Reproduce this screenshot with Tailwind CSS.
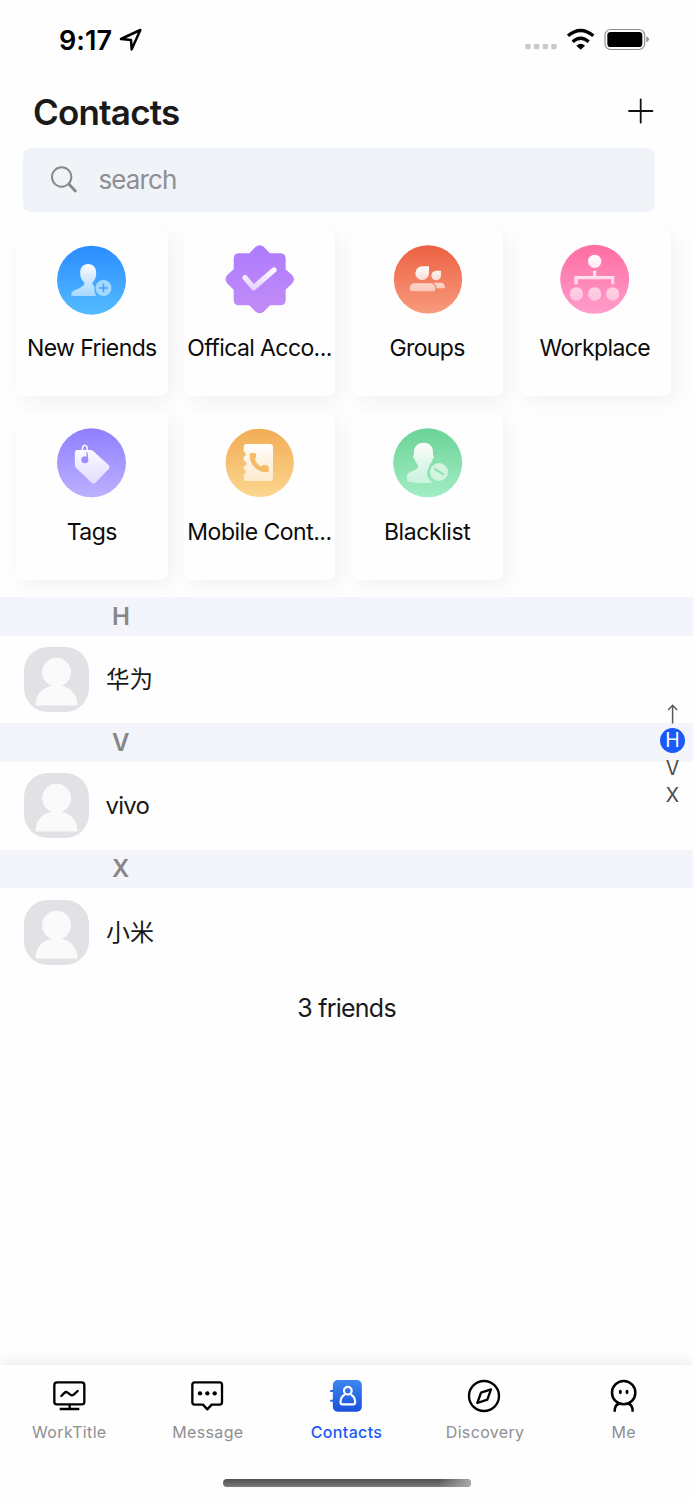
<!DOCTYPE html>
<html lang="en">
<head>
<meta charset="utf-8">
<title>Contacts</title>
<script src="https://cdn.jsdelivr.net/npm/@tailwindcss/browser@4"></script>
</head>
<body class="bg-white">
<div class="relative flex h-[1500px] w-[693px] flex-col overflow-hidden bg-[#fefefe] font-['Inter','Noto_Sans_CJK_SC',sans-serif] text-[#1a1a1a]">

  <!-- Status bar -->
  <div class="flex h-20 shrink-0 items-center pl-[59px] pr-[43.5px] text-black">
    <span class="w-[54px] whitespace-nowrap pt-px text-[27px] font-semibold leading-8 tracking-[0.1px]">9:17</span>
    <svg class="ml-[6px] h-6 w-6" viewBox="357 84 72 72" fill="none" stroke="#000" stroke-width="7.500" stroke-linejoin="round"><path d="M363 117 L421 90 L395 148 L393 120 Z"/></svg>
    <svg class="ml-auto h-[26px] w-[126px]" viewBox="530 81 378 78">
      <g fill="#c9c9cb"><rect x="534" y="132" width="16" height="16" rx="4"/><rect x="560" y="132" width="16" height="16" rx="4"/><rect x="586" y="132" width="16" height="16" rx="4"/><rect x="612" y="132" width="16" height="16" rx="4"/></g>
      <g fill="none" stroke="#000" stroke-width="10"><path d="M662 107 Q700 76 738 107"/><path d="M676 125 Q700 104 724 125"/></g>
      <path d="M687 137 Q700 126 713 137 L700 149 Z"/>
      <rect x="773" y="88.500" width="119" height="60" rx="17" fill="none" stroke="#8f8f8f" stroke-width="3.500"/>
      <rect x="780" y="96" width="105" height="45" rx="10"/>
      <path d="M897 109 Q905 112 905 118 Q905 124 897 127 Z" fill="#8f8f8f"/>
    </svg>
  </div>

  <!-- Title row -->
  <header class="flex h-[68px] shrink-0 items-center justify-between pl-[33px] pr-[39px]">
    <h1 class="mb-[3px] text-[35px] font-semibold leading-[63px] tracking-[-0.8px]">Contacts</h1>
    <svg class="mb-[6px] h-[26px] w-[26px]" viewBox="0 0 26 26" stroke="#111" stroke-width="1.800" stroke-linecap="round"><path d="M12.700 1.300V24.700M1 13H24.400"/></svg>
  </header>

  <!-- Search -->
  <div class="ml-[23px] flex h-[64px] w-[632px] shrink-0 items-center rounded-[7px] bg-[#f0f3f8] pl-[27px]">
    <svg class="h-7 w-7" viewBox="149 497 84 84" fill="none" stroke="#87878b"><circle cx="184" cy="530" r="29" stroke-width="6"/><path d="M206 552 L225 572" stroke-width="8.500" stroke-linecap="round"/></svg>
    <span class="ml-[20.5px] text-[26px] leading-8 tracking-[-0.9px] text-[#8e8e93]">search</span>
  </div>

  <!-- Shortcuts -->
  <div class="ml-4 mt-[16.6px] grid shrink-0 grid-cols-[repeat(4,151.6px)] gap-x-[16.1px] gap-y-[16.7px] text-[23px] leading-[30px] text-[#0c0c0c]">
    <div class="flex h-[167.5px] flex-col items-center rounded-lg bg-[#fefefe] pt-[15px] shadow-[6px_6px_20px_rgba(0,0,0,0.05)]">
      <svg class="h-[71px] w-[71px] shrink-0" viewBox="170.500 71 213 213">
        <defs>
          <linearGradient id="blue" x2="0" y2="1"><stop stop-color="#2a8cff"/><stop offset="1" stop-color="#54bcff"/></linearGradient>
          <linearGradient id="w1" gradientUnits="userSpaceOnUse" x1="0" y1="130" x2="0" y2="230"><stop stop-color="#fff"/><stop offset="1" stop-color="#fff" stop-opacity=".5"/></linearGradient>
        </defs>
        <circle cx="277" cy="179.500" r="103.500" fill="url(#blue)"/>
        <path fill="url(#w1)" d="M267 131 C282 131 291 142 291 157 C291 172 286 180 281 185 C278 190 281 195 285 197 C286 210 286 218 291 227 H221 C216 227 215 224 217 218 C221 209 240 207 250 197 C257 192 257 188 253 184 C247 178 243 170 243 157 C243 142 252 131 267 131 Z"/>
        <circle cx="313" cy="203" r="24" fill="#a5d8ff"/>
        <path d="M313 190V216M300 203H326" stroke="#3ba0ff" stroke-width="4.500"/>
      </svg>
      <span class="mt-[18px] whitespace-nowrap tracking-[-0.6px]">New Friends</span>
    </div>
    <div class="flex h-[167.5px] flex-col items-center rounded-lg bg-[#fefefe] pt-[15px] shadow-[6px_6px_20px_rgba(0,0,0,0.05)]">
      <svg class="h-[71px] w-[71px] shrink-0" viewBox="673 71 213 213">
        <defs>
          <linearGradient id="purple" x2="0" y2="1"><stop stop-color="#ae7bff"/><stop offset="1" stop-color="#c28cf6"/></linearGradient>
          <linearGradient id="w2" gradientUnits="userSpaceOnUse" x1="0" y1="140" x2="0" y2="212"><stop stop-color="#fff"/><stop offset="1" stop-color="#fff" stop-opacity=".6"/></linearGradient>
        </defs>
        <path fill="url(#purple)" d="M768 79 Q780 70 792 79 L811 99 H842 Q858 99 858 115 V147 L878 165 Q888 177 878 189 L858 208 V239 Q858 255 842 255 H811 L792 274 Q780 284 768 274 L749 255 H718 Q702 255 702 239 V208 L682 189 Q673 177 682 165 L702 147 V115 Q702 99 718 99 H749 Z"/>
        <path d="M736 172 L762 202 L823 149" fill="none" stroke="url(#w2)" stroke-width="16" stroke-linecap="round" stroke-linejoin="round"/>
      </svg>
      <span class="mt-[18px] whitespace-nowrap tracking-[-0.6px]">Offical Acco...</span>
    </div>
    <div class="flex h-[167.5px] flex-col items-center rounded-lg bg-[#fefefe] pt-[15px] shadow-[6px_6px_20px_rgba(0,0,0,0.05)]">
      <svg class="h-[71px] w-[71px] shrink-0" viewBox="135 71 213 213">
        <defs>
          <linearGradient id="red" x2="0" y2="1"><stop stop-color="#ed6143"/><stop offset="1" stop-color="#f89a7c"/></linearGradient>
          <linearGradient id="w3" gradientUnits="userSpaceOnUse" x1="0" y1="137" x2="0" y2="216"><stop stop-color="#fff"/><stop offset="1" stop-color="#fff" stop-opacity=".5"/></linearGradient>
        </defs>
        <circle cx="243" cy="177" r="102.500" fill="url(#red)"/>
        <g fill="url(#w3)">
          <path d="M226 138 H246 V159 A20.500 20.500 0 1 1 226 138 Z"/>
          <path d="M267 151 H282 V166 A14.500 14.500 0 1 1 267 151 Z"/>
          <path d="M202 189 H250 C259 189 265 197 265 206 C265 211 263 213 259 213 H194 C190 213 188 210 188 206 C188 196 194 189 202 189 Z"/>
          <path d="M259 187 H281 C289 187 294 193 294 200 C294 203 292 204 289 204 H269 C268 197 264 190 259 187 Z"/>
        </g>
      </svg>
      <span class="mt-[18px] whitespace-nowrap tracking-[-0.6px]">Groups</span>
    </div>
    <div class="flex h-[167.5px] flex-col items-center rounded-lg bg-[#fefefe] pt-[15px] shadow-[6px_6px_20px_rgba(0,0,0,0.05)]">
      <svg class="h-[71px] w-[71px] shrink-0" viewBox="638 71 213 213">
        <defs>
          <linearGradient id="pink" x2="0" y2="1"><stop stop-color="#ff6da2"/><stop offset="1" stop-color="#ff9dcb"/></linearGradient>
          <linearGradient id="w4" gradientUnits="userSpaceOnUse" x1="0" y1="100" x2="0" y2="242"><stop stop-color="#fff"/><stop offset="1" stop-color="#fff" stop-opacity=".45"/></linearGradient>
        </defs>
        <circle cx="745" cy="177" r="103.500" fill="url(#pink)"/>
        <g fill="url(#w4)">
          <circle cx="745" cy="123" r="20"/>
          <path d="M740 151 H750 V167 H804 V192 H794 V177 H695 V192 H684 V167 H740 Z"/>
          <circle cx="690" cy="221" r="20"/><circle cx="745" cy="221" r="20"/><circle cx="799" cy="221" r="20"/>
        </g>
      </svg>
      <span class="mt-[18px] whitespace-nowrap tracking-[-0.6px]">Workplace</span>
    </div>
    <div class="flex h-[167.5px] flex-col items-center rounded-lg bg-[#fefefe] pt-[15px] shadow-[6px_6px_20px_rgba(0,0,0,0.05)]">
      <svg class="h-[71px] w-[71px] shrink-0" viewBox="170.500 69 213 213">
        <defs>
          <linearGradient id="violet" x2="0" y2="1"><stop stop-color="#8f7fff"/><stop offset="1" stop-color="#bcb1ff"/></linearGradient>
          <linearGradient id="w5" gradientUnits="userSpaceOnUse" x1="0" y1="130" x2="0" y2="238"><stop stop-color="#fff"/><stop offset="1" stop-color="#fff" stop-opacity=".6"/></linearGradient>
        </defs>
        <circle cx="277" cy="173.500" r="103.500" fill="url(#violet)"/>
        <path fill="url(#w5)" d="M234 135 H274 Q279 135 283 139 L329 181 Q334 186 329 191 L289 233 Q283 239 277 233 L231 189 Q227 186 227 181 V142 Q227 135 234 135 Z"/>
        <circle cx="257" cy="164" r="10.500" fill="#9c8eff"/>
        <path d="M264 160 C266 152 265 147 262 141" fill="none" stroke="#9c8eff" stroke-width="4"/>
        <path d="M250 141 C248 128 252 121 257 121 C263 121 266 130 264 142" fill="none" stroke="#fff" stroke-width="4.500"/>
      </svg>
      <span class="mt-[18px] whitespace-nowrap tracking-[-0.5px]">Tags</span>
    </div>
    <div class="flex h-[167.5px] flex-col items-center rounded-lg bg-[#fefefe] pt-[15px] shadow-[6px_6px_20px_rgba(0,0,0,0.05)]">
      <svg class="h-[71px] w-[71px] shrink-0" viewBox="673 69 213 213">
        <defs>
          <linearGradient id="amber" x2="0" y2="1"><stop stop-color="#f2ac55"/><stop offset="1" stop-color="#fbd68f"/></linearGradient>
          <linearGradient id="w6" gradientUnits="userSpaceOnUse" x1="0" y1="116" x2="0" y2="229"><stop stop-color="#fff"/><stop offset="1" stop-color="#fff" stop-opacity=".6"/></linearGradient>
        </defs>
        <circle cx="780" cy="173.500" r="102.500" fill="url(#amber)"/>
        <path fill="url(#w6)" d="M742 117 H810 Q820 117 820 127 V218 Q820 228 810 228 H742 Q732 228 732 218 V208 A7 7 0 0 0 735 195 L732 192 V183 A7 7 0 0 0 735 169 L732 166 V155 A7 7 0 0 0 735 142 L732 139 V127 Q732 117 742 117 Z"/>
        <path fill="#f5bb68" d="M752 144 L766 144 L770 148 L768 159 L766 163 Q770 177 784 185 L791 179 L805 182 L807 186 V201 Q784 204 767 189 Q750 174 750 149 Z"/>
      </svg>
      <span class="mt-[18px] whitespace-nowrap tracking-[-0.5px]">Mobile Cont...</span>
    </div>
    <div class="flex h-[167.5px] flex-col items-center rounded-lg bg-[#fefefe] pt-[15px] shadow-[6px_6px_20px_rgba(0,0,0,0.05)]">
      <svg class="h-[71px] w-[71px] shrink-0" viewBox="135 69 213 213">
        <defs>
          <linearGradient id="green" x2="0" y2="1"><stop stop-color="#6cd396"/><stop offset="1" stop-color="#a2edc4"/></linearGradient>
          <linearGradient id="w7" gradientUnits="userSpaceOnUse" x1="0" y1="112" x2="0" y2="235"><stop stop-color="#fff"/><stop offset="1" stop-color="#fff" stop-opacity=".5"/></linearGradient>
        </defs>
        <circle cx="242" cy="173.500" r="103.500" fill="url(#green)"/>
        <path fill="url(#w7)" d="M230 113 C248 113 258 125 258 140 V150 C262 153 261 159 257 163 C255 171 251 176 247 181 V186 C236 198 237 221 258 233 Q215 237 183 230 Q180 229 180 224 V212 C180 197 211 199 213 185 V180 C208 175 205 170 203 163 C198 159 197 153 201 149 V140 C201 125 212 113 230 113 Z"/>
        <circle cx="276" cy="201" r="27" fill="#d3f4e1"/>
        <path d="M264 192 L289 208" stroke="#8fe3b5" stroke-width="6.500" stroke-linecap="round"/>
      </svg>
      <span class="mt-[18px] whitespace-nowrap tracking-[-0.4px]">Blacklist</span>
    </div>
  </div>

  <!-- Contact list -->
  <main class="relative mt-[16.7px] flex flex-col">
    <div class="flex h-[38.7px] items-center bg-[#f4f5fa] pl-[112px] pt-px text-[24px] font-semibold text-[#87878b]">H</div>
    <div class="flex h-[87.6px] items-center bg-[#fefefe] pl-[24.4px]">
      <svg class="h-[65px] w-[65px]" viewBox="0 0 65 65"><rect width="65" height="65" rx="24" fill="#e1e1e6"/><g fill="#fafafa"><circle cx="32.600" cy="25.300" r="14.500"/><path d="M11.500 58.500 C11.500 46 20 38.500 32.500 38.500 S53.500 46 53.500 58.500 Z"/></g></svg>
      <span class="ml-[16.5px] pt-px text-[23.5px]">华为</span>
    </div>
    <div class="flex h-[38.7px] items-center bg-[#f4f5fa] pl-[112px] text-[24px] font-semibold text-[#87878b]">V</div>
    <div class="flex h-[87.6px] items-center bg-[#fefefe] pl-[24.4px]">
      <svg class="h-[65px] w-[65px]" viewBox="0 0 65 65"><rect width="65" height="65" rx="24" fill="#e1e1e6"/><g fill="#fafafa"><circle cx="32.600" cy="25.300" r="14.500"/><path d="M11.500 58.500 C11.500 46 20 38.500 32.500 38.500 S53.500 46 53.500 58.500 Z"/></g></svg>
      <span class="ml-[16.200px] pt-px text-[24px] tracking-[-0.8px]">vivo</span>
    </div>
    <div class="flex h-[38.7px] items-center bg-[#f4f5fa] pl-[112px] pt-px text-[24px] font-semibold text-[#87878b]">X</div>
    <div class="flex h-[87.6px] items-center bg-[#fefefe] pl-[24.4px]">
      <svg class="h-[65px] w-[65px]" viewBox="0 0 65 65"><rect width="65" height="65" rx="24" fill="#e1e1e6"/><g fill="#fafafa"><circle cx="32.600" cy="25.300" r="14.500"/><path d="M11.500 58.500 C11.500 46 20 38.500 32.500 38.500 S53.500 46 53.500 58.500 Z"/></g></svg>
      <span class="ml-[16.5px] pt-[2px] text-[24px]">小米</span>
    </div>
    <p class="mt-4 text-center text-[25px] leading-8 tracking-[-0.75px]">3 friends</p>

    <!-- Floating letter index -->
    <nav class="absolute right-[8px] top-[103px] flex w-[25px] flex-col items-center text-[19.5px] leading-[27.5px] text-[#4a4a4c]">
      <svg class="h-[27px] w-[14px]" viewBox="0 0 14 27" fill="none" stroke="#5a5a5c" stroke-width="1.500"><path d="M6.600 23.500V5.500M2.100 10L6.600 5.300L11.100 10"/></svg>
      <span class="mb-[2px] mt-[1px] flex h-[25px] w-[25px] items-center justify-center rounded-full bg-[#1a5af8] text-white">H</span>
      <span>V</span>
      <span>X</span>
    </nav>
  </main>

  <!-- Tab bar -->
  <footer class="mt-auto flex h-[135px] shrink-0 flex-col items-center bg-[#fefefe] shadow-[0_-2px_14px_rgba(0,0,0,0.09)]">
    <div class="grid w-full grid-cols-5 text-[16px] leading-5 tracking-[0.35px] text-[#8e8e93]">
      <div class="flex flex-col items-center pt-[13px]">
        <svg class="h-9 w-10" viewBox="147 84 120 108" fill="none" stroke="#000" stroke-width="7" stroke-linecap="round" stroke-linejoin="round"><rect x="163" y="97" width="90" height="66" rx="8"/><path d="M209 163V176M179 177H238" stroke-linecap="butt"/><path d="M184 138 L194 128 Q198 124 203 128 L211 134 Q216 138 221 134 L233 123"/></svg>
        <span class="mt-[8px]">WorkTitle</span>
      </div>
      <div class="flex flex-col items-center pt-[13px]">
        <svg class="h-9 w-10" viewBox="564 84 120 108" fill="none" stroke="#000" stroke-width="7" stroke-linejoin="round"><path d="M584 97 H659 Q666 97 666 104 V156 Q666 164 659 164 H635 L622 178 L609 164 H584 Q577 164 577 156 V104 Q577 97 584 97 Z"/><g fill="#000" stroke="none"><circle cx="600" cy="130" r="6.500"/><circle cx="622" cy="130" r="6.500"/><circle cx="644" cy="130" r="6.500"/></g></svg>
        <span class="mt-[8px]">Message</span>
      </div>
      <div class="flex flex-col items-center pt-[13px] text-[#1a5af8]">
        <svg class="h-9 w-10" viewBox="138.500 84 120 108" fill="none">
          <defs><linearGradient id="tab" x2="0" y2="1"><stop stop-color="#3d87f0"/><stop offset="1" stop-color="#1a50dc"/></linearGradient></defs>
          <rect x="159" y="90" width="87" height="95" rx="15" fill="url(#tab)"/>
          <path d="M151 123H161M151 152H161" stroke="#2a68e4" stroke-width="6"/>
          <g stroke="#fff" stroke-width="6.500" stroke-linejoin="round"><circle cx="204" cy="122" r="11.500"/><path d="M195 134 C186 138 182 148 182 157 Q182 163 188 163 H220 Q226 163 226 157 C226 148 222 138 213 134"/></g>
        </svg>
        <span class="mt-[8px] font-medium">Contacts</span>
      </div>
      <div class="flex flex-col items-center pt-[13px]">
        <svg class="h-9 w-10" viewBox="555 84 120 108" fill="none" stroke="#000" stroke-width="7" stroke-linejoin="round"><circle cx="612" cy="138" r="45"/><path d="M633 118 L603 128 L592 159 L622 149 Z"/></svg>
        <span class="mt-[8px]">Discovery</span>
      </div>
      <div class="flex flex-col items-center pt-[13px]">
        <svg class="h-9 w-10" viewBox="972 84 120 108" fill="none" stroke="#000" stroke-width="7.500"><circle cx="1031" cy="128" r="35"/><path d="M1020 161 C1008 161 1004 170 1004 185M1042 161 C1054 161 1058 170 1058 185"/><g fill="#000" stroke="none"><ellipse cx="1021" cy="126" rx="4.500" ry="6.500"/><ellipse cx="1041" cy="126" rx="4.500" ry="6.500"/></g></svg>
        <span class="mt-[8px]">Me</span>
      </div>
    </div>
    <div class="mt-[37px] h-2 w-[248px] overflow-hidden rounded-full bg-linear-to-b from-[#505050] to-[#7c7c7c]">
      <div class="ml-auto h-full w-8 bg-linear-to-r from-transparent to-[#a8a8a8]"></div>
    </div>
  </footer>
</div>
</body>
</html>
